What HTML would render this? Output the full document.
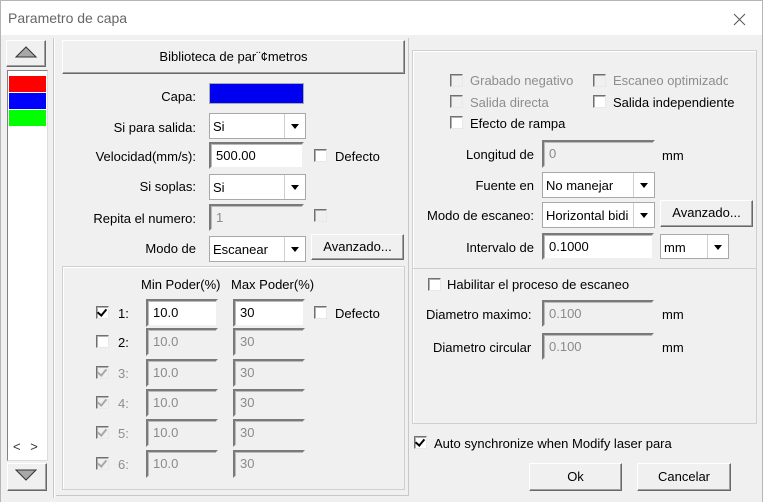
<!DOCTYPE html>
<html><head><meta charset="utf-8"><style>
*{box-sizing:border-box;margin:0;padding:0}
body{width:764px;height:502px;overflow:hidden;background:#fff;font-family:"Liberation Sans",sans-serif;font-size:13px;color:#000;position:relative}
.a{position:absolute}
.win{left:0;top:0;width:763px;height:502px;border:1px solid #b5b5b5;border-bottom:none;background:#f0f0f0}
.title{left:1px;top:1px;width:761px;height:34px;background:#fff}
.btn{position:absolute;background:#f0f0f0;border:1px solid;border-color:#fff #696969 #696969 #fff;box-shadow:inset -1px -1px 0 #a0a0a0;text-align:center}
.inp{position:absolute;background:#fff;border:2px solid;border-color:#7a7a7a #f0f0f0 #f0f0f0 #7a7a7a;box-shadow:inset 1px 1px 0 #bbb;padding:4px 0 0 5px;font-size:13px}
.dis{background:#f0f0f0;color:#8a8a8a}
.cmb{position:absolute;background:#fff;border:1px solid #a8a8a8;padding:5px 0 0 3px}
.cmb:after{content:"";position:absolute;right:0;top:0;width:20px;height:100%;border-left:1px solid #cfcfcf;background:#fff}
.cmb i{position:absolute;right:6px;top:50%;margin-top:-2px;border-left:4px solid transparent;border-right:4px solid transparent;border-top:5px solid #000;z-index:2}
.cb{position:absolute;width:13px;height:13px;background:#fff;border:1px solid;border-color:#707070 #e8e8e8 #e8e8e8 #707070;box-shadow:inset 1px 1px 0 #b0b0b0}
.cb.d{background:#f0f0f0}
.cb.k:after{content:"";position:absolute;left:2px;top:0px;width:4px;height:7px;border:solid #000;border-width:0 2px 2px 0;transform:rotate(40deg)}
.cb.d.k:after{border-color:#a8a8a8}
.t{position:absolute;white-space:nowrap}
.r{text-align:right}
.g{color:#8d8d8d}
.grp{position:absolute;border:1px solid #d0d0d0;box-shadow:1px 1px 0 #fff inset}
</style></head><body>
<div class="a win"></div>
<div class="a title"></div>
<div class="t" style="left:8px;top:10px;font-size:14px;color:#666">Parametro de capa</div>
<svg class="a" style="left:733px;top:13px" width="13" height="13"><path d="M1 1L12 12M12 1L1 12" stroke="#555" stroke-width="1"/></svg>

<div class="btn" style="left:6px;top:40px;width:40px;height:27px"></div>
<svg class="a" style="left:15px;top:46px" width="22" height="12"><path d="M1 11L11 1L21 11Z" fill="#a8a8a8" stroke="#333"/></svg>
<div class="a" style="left:7px;top:70px;width:41px;height:391px;background:#fff;border:1px solid #828282;border-right-color:#ddd;border-bottom-color:#ddd"></div>
<div class="a" style="left:9px;top:76px;width:37px;height:16px;background:#f00"></div>
<div class="a" style="left:9px;top:93px;width:37px;height:16px;background:#00f"></div>
<div class="a" style="left:9px;top:110px;width:37px;height:16px;background:#0f0"></div>
<div class="t" style="left:13px;top:439px;font-size:13px;color:#333;letter-spacing:3px">&lt; &gt;</div>
<div class="btn" style="left:7px;top:463px;width:40px;height:28px"></div>
<svg class="a" style="left:15px;top:469px" width="22" height="12"><path d="M1 1L11 11L21 1Z" fill="#a8a8a8" stroke="#333"/></svg>
<div class="a" style="left:53px;top:38px;width:1px;height:460px;background:#c8c8c8"></div>
<div class="a" style="left:54px;top:38px;width:1px;height:460px;background:#fff"></div>

<div class="btn" style="left:62px;top:40px;width:343px;height:34px;line-height:31px">Biblioteca de par¨¢metros</div>
<div class="t r" style="left:60px;width:136px;top:89px">Capa:</div>
<div class="a" style="left:209px;top:83px;width:95px;height:21px;background:#0000f0;border:1px solid #aaa"></div>
<div class="t r" style="left:60px;width:136px;top:120px">Si para salida:</div>
<div class="cmb" style="left:209px;top:113px;width:97px;height:26px">Si<i></i></div>
<div class="t r" style="left:60px;width:136px;top:149px">Velocidad(mm/s):</div>
<div class="inp" style="left:209px;top:142px;width:95px;height:27px">500.00</div>
<div class="cb" style="left:314px;top:149px"></div>
<div class="t" style="left:335px;top:149px">Defecto</div>
<div class="t r" style="left:60px;width:136px;top:179px">Si soplas:</div>
<div class="cmb" style="left:209px;top:174px;width:97px;height:26px">Si<i></i></div>
<div class="t r" style="left:60px;width:136px;top:211px">Repita el numero:</div>
<div class="inp dis" style="left:209px;top:204px;width:95px;height:27px">1</div>
<div class="cb d" style="left:314px;top:209px"></div>
<div class="t r" style="left:60px;width:136px;top:241px">Modo de</div>
<div class="cmb" style="left:209px;top:236px;width:97px;height:26px">Escanear<i></i></div>
<div class="btn" style="left:311px;top:234px;width:93px;height:26px;line-height:23px">Avanzado...</div>

<div class="grp" style="left:62px;top:266px;width:343px;height:224px"></div>
<div class="t" style="left:141px;top:277px">Min Poder(%)</div>
<div class="t" style="left:231px;top:277px">Max Poder(%)</div>
<div class="cb k" style="left:96px;top:306px"></div><div class="t" style="left:118px;top:306px">1:</div>
<div class="inp" style="left:146px;top:299px;width:72px;height:28px">10.0</div>
<div class="inp" style="left:233px;top:299px;width:72px;height:28px">30</div>
<div class="cb" style="left:314px;top:306px"></div><div class="t" style="left:335px;top:306px">Defecto</div>
<div class="cb" style="left:96px;top:335px"></div><div class="t" style="left:118px;top:335px">2:</div>
<div class="inp dis" style="left:146px;top:328px;width:72px;height:28px">10.0</div>
<div class="inp dis" style="left:233px;top:328px;width:72px;height:28px">30</div>
<div class="cb d k" style="left:96px;top:366px"></div><div class="t g" style="left:118px;top:366px">3:</div>
<div class="inp dis" style="left:146px;top:359px;width:72px;height:28px">10.0</div>
<div class="inp dis" style="left:233px;top:359px;width:72px;height:28px">30</div>
<div class="cb d k" style="left:96px;top:396px"></div><div class="t g" style="left:118px;top:396px">4:</div>
<div class="inp dis" style="left:146px;top:389px;width:72px;height:28px">10.0</div>
<div class="inp dis" style="left:233px;top:389px;width:72px;height:28px">30</div>
<div class="cb d k" style="left:96px;top:426px"></div><div class="t g" style="left:118px;top:426px">5:</div>
<div class="inp dis" style="left:146px;top:419px;width:72px;height:28px">10.0</div>
<div class="inp dis" style="left:233px;top:419px;width:72px;height:28px">30</div>
<div class="cb d k" style="left:96px;top:457px"></div><div class="t g" style="left:118px;top:457px">6:</div>
<div class="inp dis" style="left:146px;top:450px;width:72px;height:28px">10.0</div>
<div class="inp dis" style="left:233px;top:450px;width:72px;height:28px">30</div>
<div class="a" style="left:56px;top:495px;width:352px;height:1px;background:#c8c8c8"></div>
<div class="a" style="left:408px;top:38px;width:1px;height:458px;background:#c8c8c8"></div>

<div class="grp" style="left:412px;top:50px;width:345px;height:374px"></div>
<div class="a" style="left:412px;top:268px;width:345px;height:1px;background:#d0d0d0"></div>
<div class="cb d" style="left:450px;top:74px"></div><div class="t g" style="left:470px;top:73px">Grabado negativo</div>
<div class="cb d" style="left:593px;top:74px"></div><div class="t g" style="left:613px;top:73px">Escaneo optimizado</div>
<div class="a" style="left:728px;top:66px;width:28px;height:20px;background:#f0f0f0"></div>
<div class="cb d" style="left:450px;top:95px"></div><div class="t g" style="left:470px;top:95px">Salida directa</div>
<div class="cb" style="left:593px;top:95px"></div><div class="t" style="left:613px;top:95px">Salida independiente</div>
<div class="cb" style="left:450px;top:116px"></div><div class="t" style="left:470px;top:116px">Efecto de rampa</div>
<div class="t r" style="left:410px;width:124px;top:147px">Longitud de</div>
<div class="inp dis" style="left:542px;top:140px;width:113px;height:28px">0</div>
<div class="t" style="left:662px;top:148px">mm</div>
<div class="t r" style="left:410px;width:124px;top:178px">Fuente en</div>
<div class="cmb" style="left:542px;top:172px;width:113px;height:26px">No manejar<i></i></div>
<div class="t r" style="left:410px;width:124px;top:208px">Modo de escaneo:</div>
<div class="cmb" style="left:542px;top:202px;width:113px;height:26px">Horizontal bidi<i></i></div>
<div class="btn" style="left:660px;top:200px;width:93px;height:27px;line-height:24px">Avanzado...</div>
<div class="t r" style="left:410px;width:124px;top:240px">Intervalo de</div>
<div class="inp" style="left:542px;top:233px;width:112px;height:27px">0.1000</div>
<div class="cmb" style="left:660px;top:234px;width:69px;height:25px">mm<i></i></div>
<div class="cb" style="left:428px;top:278px"></div><div class="t" style="left:447px;top:277px">Habilitar el proceso de escaneo</div>
<div class="t" style="left:426px;top:307px">Diametro maximo:</div>
<div class="inp dis" style="left:542px;top:300px;width:112px;height:27px">0.100</div>
<div class="t" style="left:662px;top:307px">mm</div>
<div class="t" style="left:433px;top:340px">Diametro circular</div>
<div class="inp dis" style="left:542px;top:333px;width:112px;height:27px">0.100</div>
<div class="t" style="left:662px;top:340px">mm</div>

<div class="cb k" style="left:414px;top:436px"></div><div class="t" style="left:434px;top:436px">Auto synchronize when Modify laser para</div>
<div class="btn" style="left:529px;top:463px;width:93px;height:28px;line-height:25px">Ok</div>
<div class="btn" style="left:637px;top:463px;width:94px;height:28px;line-height:25px">Cancelar</div>
</body></html>
